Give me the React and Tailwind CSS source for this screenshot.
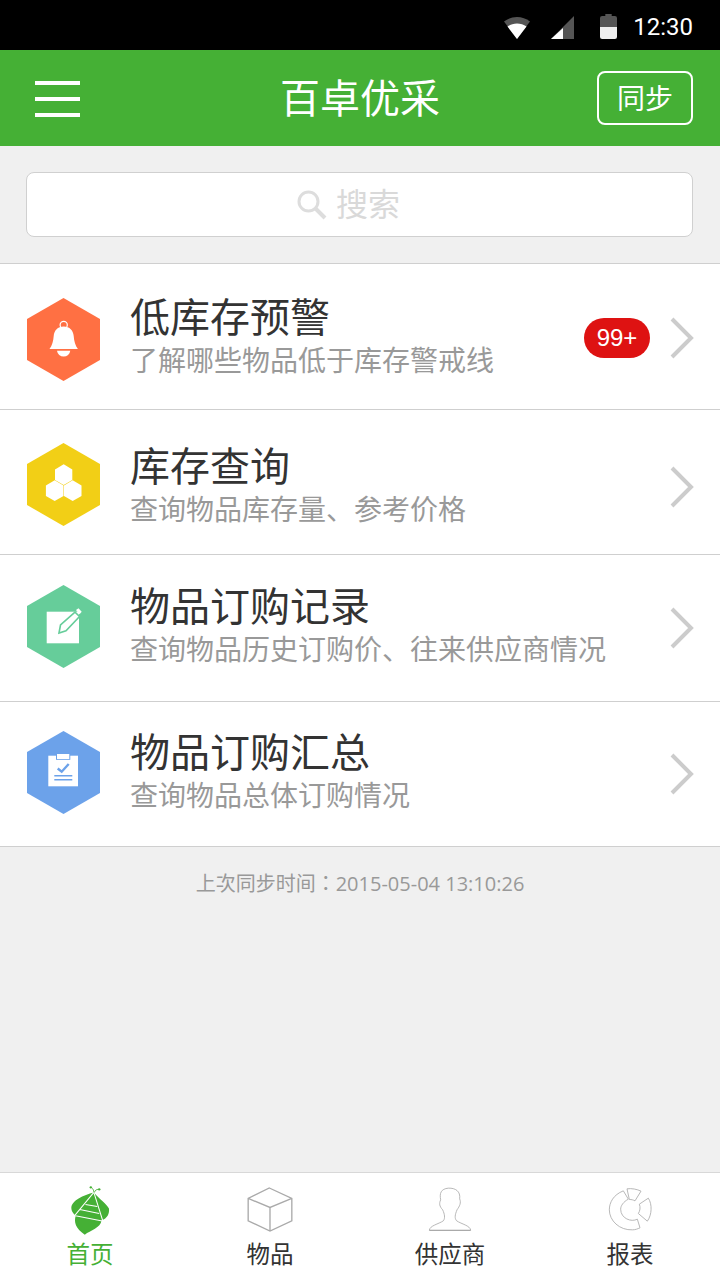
import React from 'react';

const hexPoints = '36.5,0 73,21 73,62 36.5,83 0,62 0,21';

const BellGlyph = () => (
    <>
        <circle cx="36.7" cy="27" r="3.6" fill="none" stroke="#fff" strokeWidth="1.2" />
        <path d="M36.7 28.5c-6 0-9.5 4-10 9.5-.4 5-1.5 9.5-4.2 13h28.400c-2.700-3.500-3.800-8-4.200-13-.5-5.500-4-9.500-10-9.500z" fill="#fff" />
        <path d="M30 52.700h13.300a6.700 6.700 0 0 1-13.300 0z" fill="#fff" />
    </>
);

const CellsGlyph = () => (
    <>
        <polygon points="36.700,21.300 45.300,26.400 45.300,37 36.700,42.100 28,37 28,26.400" fill="#fff" />
        <polygon points="27.700,37.300 36.500,42.400 36.500,53 27.700,58 18.900,53 18.900,42.400" fill="#fff" />
        <polygon points="45.700,37.300 54.500,42.400 54.500,53 45.700,58 37,53 37,42.400" fill="#fff" />
    </>
);

const EditGlyph = () => (
    <>
        <rect x="19.700" y="26.700" width="32.300" height="31.600" fill="#fff" />
        <path d="M32 48l1.500-8L48 27.200l4.500 4.300L39 45.800z" fill="#fff" stroke="#66cd9a" strokeWidth="1.600" />
        <path d="M49 25l2.500-1.800 3.200 3.500-2.200 2.500z" fill="#fff" />
    </>
);

const ClipboardGlyph = () => (
    <>
        <rect x="21.300" y="24.700" width="29.700" height="30.600" fill="#fff" />
        <rect x="29" y="22.400" width="14.300" height="6.400" fill="#6ca2ea" />
        <rect x="30" y="23" width="12.300" height="5" fill="#fff" />
        <path d="M30.700 37.500l4 3.200 7-7.700" fill="none" stroke="#6ca2ea" strokeWidth="2.400" />
        <path d="M27.300 44.700h18M27.300 48.700h18" stroke="#6ca2ea" strokeWidth="1.600" />
    </>
);

const rows = [
    { title: '低库存预警', sub: '了解哪些物品低于库存警戒线', color: '#ff7043', glyph: <BellGlyph />, h: 'h-[146px]', text: 'pt-[29px]', icon: 'pt-[34px]', arrow: 'pt-[53px]', badge: true },
    { title: '库存查询', sub: '查询物品库存量、参考价格', color: '#f2cf16', glyph: <CellsGlyph />, h: 'h-[145px]', text: 'pt-[32px]', icon: 'pt-[33px]', arrow: 'pt-[56px]' },
    { title: '物品订购记录', sub: '查询物品历史订购价、往来供应商情况', color: '#66cd9a', glyph: <EditGlyph />, h: 'h-[147px]', text: 'pt-[27px]', icon: 'pt-[30px]', arrow: 'pt-[52px]' },
    { title: '物品订购汇总', sub: '查询物品总体订购情况', color: '#6ca2ea', glyph: <ClipboardGlyph />, h: 'h-[145px]', text: 'pt-[26px]', icon: 'pt-[29px]', arrow: 'pt-[51px]' },
];

const Row = ({ row }) => (
    <div className={`flex items-start border-b border-[#cfcfcf] bg-white pl-[27px] ${row.h}`}>
        <div className={`w-[103px] shrink-0 ${row.icon}`}>
            <svg width="73" height="83" viewBox="0 0 73 83">
                <polygon points={hexPoints} fill={row.color} />
                {row.glyph}
            </svg>
        </div>
        <div className={`flex-1 ${row.text}`}>
            <div className="text-[40px] leading-[50px] text-[#333333]">{row.title}</div>
            <div className="-mt-[1px] text-[28px] leading-[40px] text-[#999999]">{row.sub}</div>
        </div>
        {row.badge && (
            <div className="mt-[54px] flex h-[40px] w-[66px] shrink-0 items-center justify-center rounded-full bg-[#de1212] text-[24px] text-white">
                99+
            </div>
        )}
        <div className={`ml-[19px] mr-[25px] shrink-0 ${row.arrow}`}>
            <svg width="26" height="42" viewBox="0 0 26 42" className="block">
                <path d="M3 2l19 19L3 40" fill="none" stroke="#cccccc" strokeWidth="4" />
            </svg>
        </div>
    </div>
);

const tabs = [
    {
        label: '首页',
        active: true,
        icon: (
            <svg width="47" height="52" viewBox="80 30 140 155">
                <path d="M160 52C130 60 92 75 93 100c1 12 10 18 13 22-6 18-1 38 27 56 17-13 47-20 50-43 17-5 24-20 22-35-5-12-30-30-45-48z" fill="#45b035" />
                <path d="M160 52L104 120M160 52l27 86M135 88l35 6M118 103l58 12M105 122l80 15" fill="none" stroke="#fff" strokeWidth="3" />
                <path d="M160 52c0-6-2-10-6-13M162 52c1-6 6-9 11-9" fill="none" stroke="#45b035" strokeWidth="2.500" />
                <circle cx="151" cy="37" r="3.500" fill="#45b035" />
                <circle cx="176" cy="43" r="3.500" fill="#45b035" />
            </svg>
        ),
    },
    {
        label: '物品',
        icon: (
            <svg width="46" height="45" viewBox="624 39 136 134" className="mb-[5px]">
                <path d="M690 42l67 31v67l-65 30-65-30V73zM627 73l65 27 65-27M692 100v70" fill="none" stroke="#aaaaaa" strokeWidth="4" />
            </svg>
        ),
    },
    {
        label: '供应商',
        icon: (
            <svg width="44" height="45" viewBox="84 37 132 134" className="mb-[5px]">
                <path d="M88 166c2-14 27-18 42-28 6-8 4-20-2-33-10-11-11-19-6-30-4-20 1-33 23-35 22-1 37 10 34 32 5 12 0 22-8 33-6 15-8 25-1 33 15 10 40 14 42 28z" fill="none" stroke="#aaaaaa" strokeWidth="2.500" />
                <path d="M88 167h124" stroke="#aaaaaa" strokeWidth="3" />
            </svg>
        ),
    },
    {
        label: '报表',
        icon: (
            <svg width="44" height="45" viewBox="624 39 132 134" className="mb-[5px]">
                <path d="M670 50C640 62 628 85 628 107c0 32 30 62 70 60 8 0 15-3 22-6l-8-26c-18 10-50-2-50-30 0-10 8-22 23-30z" fill="none" stroke="#aaaaaa" strokeWidth="2.500" />
                <path d="M681 44c14-2 30 1 42 7l-18 29c-6-3-10-4-17-4z" fill="none" stroke="#aaaaaa" strokeWidth="2.500" />
                <path d="M745 72c12 18 11 50-3 69l-27-23c5-8 7-18 3-28z" fill="none" stroke="#aaaaaa" strokeWidth="2.500" />
            </svg>
        ),
    },
];

const App = () => {
    return (
        <div className="flex h-[1280px] w-[720px] flex-col overflow-hidden bg-[#f0f0f0] font-['Liberation_Sans','Noto_Sans_CJK_SC',sans-serif]">
            {/* status bar */}
            <div className="flex h-[50px] shrink-0 items-center justify-end bg-black pr-[27px] pt-[3px]">
                <svg width="28" height="24" viewBox="0 0 28 24" className="mr-[20px]">
                    <path d="M14 24L1 6.500C8.500.500 19.500.500 27 6.500z" fill="#555555" />
                    <path d="M14 24L4.500 11.500c5.500-4 13.500-4 19 0z" fill="#ffffff" />
                </svg>
                <svg width="24" height="24" viewBox="0 0 24 24" className="mr-[25px]">
                    <path d="M23 1v23H0z" fill="#555555" />
                    <path d="M12 13v11H0z" fill="#ffffff" />
                </svg>
                <svg width="17" height="25" viewBox="0 0 16 25" preserveAspectRatio="none" className="mr-[16px]">
                    <path d="M5 0h6v2h3a2 2 0 0 1 2 2v9H0V4a2 2 0 0 1 2-2h3z" fill="#555555" />
                    <path d="M0 13h16v10a2 2 0 0 1-2 2H2a2 2 0 0 1-2-2z" fill="#eeeeee" />
                </svg>
                <span className="font-['Roboto',sans-serif] text-[24px] leading-none text-white">12:30</span>
            </div>

            {/* header */}
            <div className="flex h-[96px] shrink-0 items-center bg-[#45b035] px-[27px]">
                <div className="flex-1">
                    <div className="ml-[8px] flex w-[45px] flex-col gap-[12px] pt-[2px]">
                        <div className="h-[4px] bg-white" />
                        <div className="h-[4px] bg-white" />
                        <div className="h-[4px] bg-white" />
                    </div>
                </div>
                <div className="pt-[2px] text-[40px] text-white">百卓优采</div>
                <div className="flex flex-1 justify-end">
                    <div className="flex h-[54px] w-[96px] items-center justify-center rounded-[8px] border-2 border-white pt-[3px] text-[28px] text-white">
                        同步
                    </div>
                </div>
            </div>

            {/* search */}
            <div className="h-[117px] shrink-0 px-[26px] pt-[26px]">
                <div className="flex h-[65px] w-[667px] items-center justify-center gap-[9px] rounded-[8px] border border-[#d0d0d0] bg-white pr-[22px]">
                    <svg width="30" height="30" viewBox="0 0 30 30">
                        <circle cx="11.500" cy="11.500" r="9.500" fill="none" stroke="#dddddd" strokeWidth="3" />
                        <path d="M18.500 18.500L28 28" stroke="#dddddd" strokeWidth="4" />
                    </svg>
                    <span className="text-[32px] text-[#d9d9d9]">搜索</span>
                </div>
            </div>

            {/* list */}
            <div className="shrink-0 border-t border-[#cfcfcf]">
                {rows.map((row) => (
                    <Row key={row.title} row={row} />
                ))}
            </div>

            <div className="flex-1 pt-[22px] text-center font-['Open_Sans','Noto_Sans_CJK_TC',sans-serif] text-[20px] leading-[30px] text-[#999999]">
                上次同步时间：2015-05-04 13:10:26
            </div>

            {/* bottom tabs */}
            <div className="grid h-[108px] shrink-0 grid-cols-4 border-t border-[#d8d8d8] bg-white">
                {tabs.map((tab) => (
                    <div key={tab.label} className="flex flex-col items-center">
                        <div className="flex h-[64px] items-end">{tab.icon}</div>
                        <div className={`text-[23.5px] leading-[36px] ${tab.active ? 'text-[#45b035]' : 'text-[#333333]'}`}>
                            {tab.label}
                        </div>
                    </div>
                ))}
            </div>
        </div>
    );
};

export default App;
